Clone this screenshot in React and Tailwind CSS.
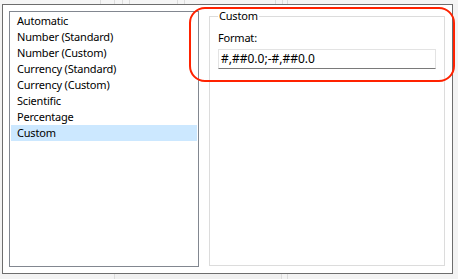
import React from 'react';

const formats = [
  'Automatic',
  'Number (Standard)',
  'Number (Custom)',
  'Currency (Standard)',
  'Currency (Custom)',
  'Scientific',
  'Percentage',
  'Custom',
];

const App = () => {
  return (
    <div className="relative w-[458px] h-[279px] bg-[#f3f3f3] overflow-hidden font-['Noto_Sans',sans-serif] text-[11px] tracking-[-0.2px] text-black">
      {/* strip of the window behind, top */}
      <div className="flex h-[4px] bg-[#f5f5f5]">
        <div className="w-[101px] border-r border-[#dcdcdc]" />
        <div className="w-[14px] border-r border-[#dcdcdc]" />
        <div className="w-[8px] border-r border-[#dcdcdc]" />
        <div className="w-[7px] border-r border-[#dcdcdc]" />
        <div className="w-[48px] border-r border-[#dcdcdc]" />
        <div className="w-[7px] border-r border-[#dcdcdc]" />
        <div className="w-[91px] border-r border-[#dcdcdc]" />
        <div className="w-[7px] border-r border-[#dcdcdc]" />
        <div className="w-[5px] border-r border-[#dcdcdc]" />
      </div>

      <div className="ml-[2px] w-[451px] h-[270px] border border-[#6d6d6d] bg-white flex gap-[10px] pl-[6px] pr-[7px] pt-[6px] pb-[6px]">
        {/* list */}
        <div className="w-[190px] border border-[#828790] p-[1px]">
          <ul>
            {formats.map((f) => (
              <li
                key={f}
                className={`h-[16px] leading-[16px] pl-[6px] ${f === 'Custom' ? 'bg-[#cce8ff]' : ''}`}
              >
                {f}
              </li>
            ))}
          </ul>
        </div>

        {/* group box */}
        <div className="flex-1 mt-[5px] mb-[1px] border border-[#dcdcdc] relative px-[8px]">
          <span className="absolute -top-[9px] left-[8px] bg-white px-[1px] leading-[16px]">Custom</span>
          <div className="mt-[13px] leading-[16px]">Format:</div>
          <div className="mt-[3px] h-[20px] w-[218px] border border-[#e3e3e3] border-b-[#7a7a7a] flex items-center px-[2px] text-[12px] tracking-normal">
            #,##0.0;-#,##0.0
          </div>
        </div>
      </div>

      {/* strip of the window behind, bottom */}
      <div className="flex h-[5px]">
        <div className="w-[115px] border-r border-[#dcdcdc]" />
        <div className="w-[167px] bg-[#f0f0f0] border-r border-[#dcdcdc]" />
        <div className="w-[6px] border-r border-[#dcdcdc]" />
      </div>

      {/* red annotation */}
      <div className="absolute left-[189px] top-[7px] w-[266px] h-[75px] border-2 border-[#ff2200] rounded-[16px]" />
    </div>
  );
};

export default App;
